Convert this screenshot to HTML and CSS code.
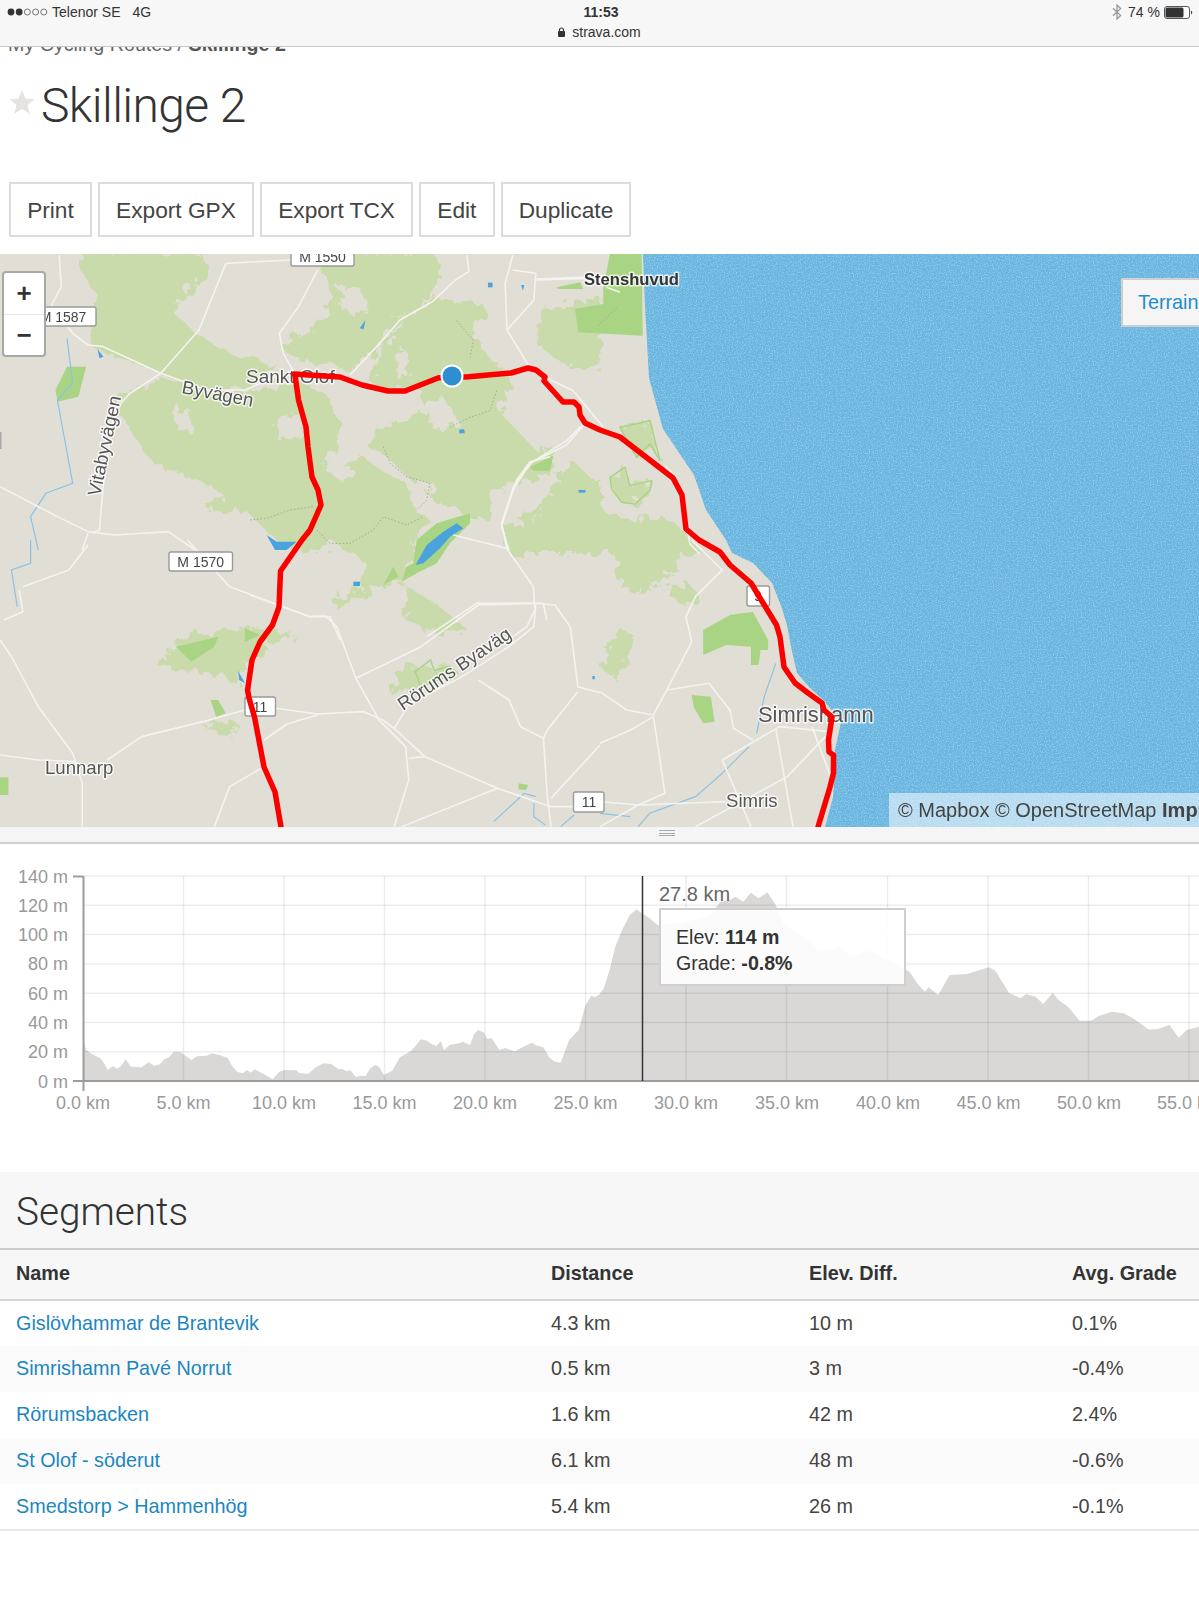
FILE: index.html
```html
<!DOCTYPE html>
<html lang="en">
<head>
<meta charset="utf-8">
<title>Skillinge 2 | Strava</title>
<link rel="stylesheet" href="styles.css">
</head>
<body>
<header class="status">
  <div class="status-left">
    <svg class="signal" width="42" height="10" viewBox="0 0 42 10"><circle cx="4" cy="5" r="3.4" fill="#333"/><circle cx="12.2" cy="5" r="3.4" fill="#333"/><circle cx="20.4" cy="5" r="3" fill="none" stroke="#555" stroke-width=".8"/><circle cx="28.6" cy="5" r="3" fill="none" stroke="#555" stroke-width=".8"/><circle cx="36.8" cy="5" r="3" fill="none" stroke="#555" stroke-width=".8"/></svg>
    <span class="carrier">Telenor SE</span><span>4G</span>
  </div>
  <div class="status-center">
    <div class="clock">11:53</div>
    <div class="url"><svg width="7" height="10" viewBox="0 0 7 10"><rect x="0" y="4" width="7" height="6" rx="1" fill="#333"/><path d="M1.5 4.5V3a2 2 0 0 1 4 0v1.5" fill="none" stroke="#333" stroke-width="1.2"/></svg>strava.com</div>
  </div>
  <div class="status-right">
    <svg width="10" height="16" viewBox="0 0 10 16"><path d="M1 4.2 8.6 11.4 5 15V1L8.6 4.6 1 11.8" fill="none" stroke="#999" stroke-width="1.3"/></svg>
    <span>74 %</span>
    <svg width="29" height="13" viewBox="0 0 29 13"><rect x=".5" y=".5" width="25" height="12" rx="2.5" fill="#fff" stroke="#555"/><rect x="1.5" y="1.5" width="18" height="10" rx="1.5" fill="#333"/><path d="M27 4.5a2.2 2.2 0 0 1 0 4z" fill="#444"/></svg>
  </div>
</header>

<nav class="crumbs">My Cycling Routes / <b>Skillinge 2</b></nav>

<div class="title-row">
  <svg class="star" width="26" height="24" viewBox="0 0 26 24"><path d="M13 0l3.4 8.6 9.2.6-7.1 5.9 2.3 8.9L13 18.9l-7.8 5.1 2.3-8.9L.4 9.2l9.2-.6z" fill="#e5e4e0"/></svg>
  <h1>Skillinge 2</h1>
</div>

<div class="actions">
  <a class="btn">Print</a>
  <a class="btn">Export GPX</a>
  <a class="btn">Export TCX</a>
  <a class="btn">Edit</a>
  <a class="btn">Duplicate</a>
</div>

<section class="map">
  <svg class="map-art" width="1199" height="573" viewBox="0 254 1199 573">
    <defs>
      <filter id="rough" x="-5%" y="-5%" width="110%" height="110%"><feTurbulence type="fractalNoise" baseFrequency=".1" numOctaves="3" seed="4"/><feDisplacementMap in="SourceGraphic" scale="20"/></filter>
      <filter id="grain" x="0" y="0" width="100%" height="100%"><feTurbulence type="fractalNoise" baseFrequency=".75" numOctaves="1" seed="7"/><feColorMatrix values="0 0 0 0 1 0 0 0 0 1 0 0 0 0 1 0 0 0 .9 -.38"/><feComposite in2="SourceAlpha" operator="in"/></filter>
    </defs>
    <rect class="land" x="0" y="254" width="1199" height="573"/>

    <g filter="url(#rough)">
      <g class="light">
      <g transform="translate(0,250) scale(.3827,.3333)">
        <polygon points="215,5 525,5 545,50 520,95 470,150 450,190 490,225 510,250 570,290 620,320 655,310 690,340 730,350 640,410 540,420 420,370 330,330 240,290 235,190 250,130 210,60"/>
        <polygon points="300,470 330,430 420,385 490,405 600,430 680,425 730,400 790,400 860,440 890,520 880,590 840,650 900,700 890,760 850,900 770,900 720,870 650,790 540,780 580,730 520,690 440,660 400,640 340,540"/>
        <polygon points="740,300 760,270 830,230 870,150 840,60 850,5 1130,5 1150,60 1130,130 1070,190 1015,240 980,300 910,370 870,340 780,330"/>
        <polygon points="1000,300 1060,200 1150,140 1240,180 1250,290 1300,320 1340,410 1300,480 1400,600 1450,590 1440,680 1350,700 1310,710 1210,790 1190,770 1120,740 1010,620 960,590 990,530 1050,520 1110,480 1100,420 1000,420 960,390"/>
        <polygon points="1400,250 1430,180 1520,150 1568,140 1568,360 1470,340 1420,300"/>
        <polygon points="1320,900 1330,830 1450,790 1500,700 1568,690 1568,900"/>
      </g>
      <g transform="translate(250,420) scale(.3333)">
        <polygon points="210,250 300,160 320,95 380,140 470,190 490,270 540,300 500,350 490,440 450,490 400,490 355,520 260,570 250,540 330,500 350,430 270,380 230,350 200,300"/>
        <polygon points="640,250 730,220 720,300 640,290"/>
        <polygon points="400,20 560,50 560,100 410,100"/>
        <polygon points="470,520 610,590 540,630 470,590"/>
        <polygon points="770,340 900,250 900,370 810,410"/>
        <polygon points="590,600 635,610 630,640 570,630"/>
        <polygon points="0,620 40,640 60,660 0,660"/>
      </g>
      <g transform="translate(450,254) scale(.3333)">
        <polygon points="250,270 300,190 375,190 380,240 430,250 420,330 350,340 320,270"/>
        <polygon points="160,820 260,770 320,680 370,620 430,680 470,780 560,800 640,790 700,830 740,880 760,900 180,900"/>
        <polygon points="510,520 600,500 630,620 600,570 560,610 530,560"/>
        <polygon points="0,140 100,150 110,190 60,210 0,190"/>
        <polygon points="480,670 525,640 540,695 605,680 600,710 555,750 515,745 485,705"/>
        <polygon points="40,740 130,715 110,790 40,790"/>
      </g>
      <g transform="translate(600,540) scale(.3821,.3333)">
        <polygon points="40,30 80,0 200,0 210,80 130,150 60,150 40,80"/>
        <polygon points="170,160 230,125 260,170 230,200"/>
        <polygon points="0,380 50,260 100,300 40,420"/>
      </g>
      <g transform="translate(0,540) scale(.3827,.3333)">
        <polygon points="410,375 470,285 650,265 770,280 690,320 640,375 610,440 585,400 490,395"/>
        <polygon points="530,560 600,540 630,560 590,590"/>
        <polygon points="1010,460 1060,380 1170,380 1190,400 1100,440"/>
        <polygon points="1050,130 1150,200 1210,270 1150,280 1060,240 1060,170"/>
      </g>
      </g>
      <g class="holes">
        <g transform="translate(0,250) scale(.3827,.3333)">
          <polygon points="880,110 940,110 960,180 900,190"/>
          <polygon points="1030,310 1060,300 1070,380 1035,380"/>
          <polygon points="1110,470 1160,440 1200,520 1130,540"/>
          <polygon points="720,500 790,490 770,560 725,570"/>
          <polygon points="450,490 500,480 500,550 460,540"/>
          <polygon points="1260,300 1330,290 1380,340 1300,350"/>
        </g>
        <g transform="translate(250,420) scale(.3333)">
          <polygon points="80,0 160,0 160,50 90,60"/>
          <polygon points="500,180 550,190 530,250 500,270"/>
        </g>
      </g>
    </g>

    <g class="mid">
      <g transform="translate(450,254) scale(.3333)">
        <polygon points="375,165 460,150 460,100 480,0 575,0 578,245 385,235"/>
        <polygon points="320,100 390,85 400,105 325,105"/>
        <polygon points="240,640 310,605 300,650 250,650"/>
      </g>
      <g transform="translate(0,250) scale(.3827,.3333)">
        <polygon points="175,350 225,350 205,440 150,455 145,420"/>
      </g>
      <g transform="translate(250,420) scale(.3333)">
        <polygon points="490,430 500,360 560,310 660,280 660,310 600,370 560,430 500,460 455,485 470,440"/>
        <polygon points="400,495 430,440 445,470"/>
      </g>
      <g transform="translate(600,540) scale(.3821,.3333)">
        <polygon points="270,270 340,225 400,215 440,300 440,330 420,330 415,375 395,375 395,320 330,315 270,345"/>
        <polygon points="240,465 290,470 300,545 270,550 245,500"/>
      </g>
      <g transform="translate(0,540) scale(.3827,.3333)">
        <polygon points="460,320 570,290 560,320 500,365"/>
        <polygon points="640,265 680,285 640,305"/>
        <polygon points="550,480 570,480 590,520 565,530"/>
        <polygon points="0,712 22,712 22,765 0,765"/>
        <polygon points="1355,730 1380,735 1375,750 1355,748"/>
      </g>
    </g>
    <g class="outline">
      <g transform="translate(450,254) scale(.3333)"><polygon points="480,670 525,640 540,695 605,680 600,710 555,750 515,745 485,705"/><polygon points="510,520 600,500 630,620 600,570 560,610"/></g>
      <g transform="translate(0,540) scale(.3827,.3333)"><polygon points="1085,395 1125,360 1135,392 1175,378 1195,400 1100,440"/></g>
    </g>
    <g class="trail">
      <g transform="translate(250,420) scale(.3333)">
        <polyline points="0,300 50,295 120,270 190,260"/>
        <polyline points="200,330 240,370 300,370 370,330 400,290 470,315 520,290"/>
        <polyline points="400,80 420,130 470,170 540,190 530,240 500,270"/>
      </g>
      <g transform="translate(450,254) scale(.3333)"><polyline points="445,215 505,155"/><polyline points="20,200 70,260 60,310"/><polyline points="140,410 120,470 60,490 0,520"/></g>
    </g>

    <g class="water">
      <g transform="translate(250,420) scale(.3333)">
        <polygon points="497,435 530,375 580,335 620,310 640,325 600,350 570,385 520,430"/>
        <polygon points="50,345 80,365 140,365 110,390 75,390"/>
        <rect x="310" y="485" width="20" height="13"/><rect x="630" y="28" width="12" height="10"/>
      </g>
      <g transform="translate(0,250) scale(.3827,.3333)">
        <rect x="1275" y="98" width="12" height="14"/><polygon points="1362,105 1370,105 1366,122"/><polygon points="940,235 955,210 950,238"/><rect x="1200" y="540" width="14" height="10"/><polygon points="255,298 270,320 260,325"/><rect x="1512" y="720" width="18" height="8"/>
      </g>
      <g transform="translate(0,540) scale(.3827,.3333)"><polygon points="622,392 640,430 625,420"/><rect x="1548" y="408" width="6" height="10"/></g>
    </g>

    <g class="river">
      <g transform="translate(0,250) scale(.3827,.3333)"><polyline points="175,265 190,400 150,450 190,700 120,730 80,800 100,900"/></g>
      <g transform="translate(0,540) scale(.3827,.3333)"><polyline points="80,0 80,70 30,90 45,200"/><polyline points="1290,845 1370,760 1400,770"/><polyline points="1395,790 1395,830 1425,855"/><polyline points="1465,860 1500,825"/></g>
      <g transform="translate(600,540) scale(.3821,.3333)"><polyline points="460,370 430,470 410,580"/><polyline points="390,620 320,700 250,770 130,820 100,860"/><polyline points="0,820 80,830"/></g>
    </g>

    <g class="road">
      <g transform="translate(0,250) scale(.3827,.3333)">
        <polyline points="155,15 160,110 135,165 190,250 230,285 270,290 420,370 540,420 640,420 720,380 760,370"/>
        <polyline points="590,40 760,30"/>
        <polyline points="590,40 520,240 420,370 340,430 300,480 270,700 260,840 240,850"/>
        <polyline points="830,60 780,170 730,250 740,310 770,370"/>
        <polyline points="915,375 1000,270 1045,210 1130,155 1190,90 1225,65 1220,15"/>
        <polyline points="1340,15 1320,100 1325,240 1380,345"/>
        <polyline points="1340,60 1400,70 1395,150 1325,240"/>
        <polyline points="1400,90 1530,85"/>
        <polyline points="0,710 150,800 230,845 300,855 440,845 510,900"/>
        <polyline points="1530,520 1480,585 1385,640 1340,720 1310,830 1330,900"/>
        <polyline points="230,850 215,900"/>
      </g>
      <g transform="translate(450,254) scale(.3333)">
        <polyline points="285,370 370,410 460,520"/>
        <polyline points="395,515 350,560 245,625 190,700 155,810 175,890"/>
        <polyline points="645,635 680,670"/>
        <polyline points="710,820 720,870 750,900"/>
        <polyline points="260,75 400,70"/><polyline points="470,100 510,115"/>
      </g>
      <g transform="translate(250,420) scale(.3333)">
        <polyline points="610,345 770,385 850,500 855,570 830,620 790,650"/>
        <polyline points="530,650 680,550 880,550 890,600"/>
        <polyline points="770,385 755,310 800,180 840,125 900,110"/>
        <polyline points="0,525 180,590 240,590 270,660"/>
      </g>
      <g transform="translate(0,540) scale(.3827,.3333)">
        <polyline points="810,230 850,228 880,260 930,415 990,540 1060,620 1068,720 1030,860"/>
        <polyline points="600,140 810,230"/><polyline points="490,0 600,140"/>
        <polyline points="930,415 1100,320 1250,195 1400,190 1450,195 1490,260 1510,440 1568,458"/>
        <polyline points="1400,190 1395,260 1330,320 1200,415 1070,490 1030,565"/>
        <polyline points="1000,540 1030,565 1110,650 1300,745 1440,800 1500,800"/>
        <polyline points="1068,655 1110,650"/><polyline points="1050,860 1300,745"/>
        <polyline points="1250,420 1330,480 1360,560 1420,595 1430,770 1440,860"/>
        <polyline points="1510,455 1430,570 1420,595"/><polyline points="1568,615 1500,700 1440,775"/>
        <polyline points="0,645 100,660 200,665"/>
        <polyline points="0,300 30,350 100,500 190,640 215,730 215,860"/>
        <polyline points="280,660 370,590 530,545 640,510"/>
        <polyline points="720,505 830,522 950,515 1000,540"/>
        <polyline points="690,600 750,552 830,525"/>
        <polyline points="560,860 600,740 690,680"/>
        <polyline points="60,140 180,90 230,15"/><polyline points="10,240 60,215 50,150"/>
      </g>
      <g transform="translate(600,540) scale(.3821,.3333)">
        <polyline points="0,455 70,510 140,525 175,450 240,305 225,230 250,170 320,90"/>
        <polyline points="175,450 285,430 340,510 350,565 400,600"/>
        <polyline points="0,610 80,570 140,530"/>
        <polyline points="140,530 170,760 100,795 0,785"/>
        <polyline points="100,795 330,785"/>
        <polyline points="320,660 470,560 600,575"/>
        <polyline points="460,565 505,860"/><polyline points="320,660 395,860"/>
        <polyline points="250,860 490,710 590,590"/>
        <polyline points="555,560 610,730"/><polyline points="320,90 240,0"/><polyline points="100,795 0,860"/>
      </g>
    </g>

    <polygon class="sea" points="643,254 1199,254 1199,827 825,827 833,797 835,773 835,750 841,722 823.5,700 810,688 797,673 791,647 787,625 781.5,607 772,583 753,563 732,553 726,540 706,510 694,475 663,429 649,378 645,306"/>
    <polygon class="sea-grain" filter="url(#grain)" points="643,254 1199,254 1199,827 825,827 833,797 835,773 835,750 841,722 823.5,700 810,688 797,673 791,647 787,625 781.5,607 772,583 753,563 732,553 726,540 706,510 694,475 663,429 649,378 645,306"/>

    <g class="shield">
      <rect x="291" y="246" width="63" height="20" rx="2"/><text x="322.5" y="262">M 1550</text>
      <rect x="30" y="307" width="66" height="19" rx="2"/><text x="63" y="322">M 1587</text>
      <rect x="169" y="552" width="63.5" height="19" rx="2"/><text x="200.7" y="567">M 1570</text>
      <rect x="245" y="697" width="30.5" height="19" rx="2"/><text x="260" y="712">11</text>
      <rect x="573.5" y="792" width="30.5" height="20" rx="2"/><text x="589" y="807">11</text>
      <rect x="747" y="586" width="22.5" height="20" rx="2"/><text x="758" y="601">9</text>
    </g>

    <g class="label">
      <text class="l19" x="246" y="383">Sankt Olof</text>
      <text class="l18" transform="translate(181,393) rotate(11)">Byvägen</text>
      <text class="l18" transform="translate(100,497) rotate(-78)">Vitabyvägen</text>
      <text class="l16b" x="584" y="285">Stenshuvud</text>
      <text class="l18" x="45" y="774">Lunnarp</text>
      <text class="l18" transform="translate(403,711) rotate(-34)">Rörums Byaväg</text>
      <text class="l21" x="758" y="722">Simrishamn</text>
      <text class="l18" x="726" y="807">Simris</text>
    </g>

    <polyline class="route" points="294,374 340,377 362,385 388,391 405,391 438,378 452,376 466,377 511,373 528,368 536,370 545,377 544,381 563,402 574,402 579,407 580,415 585,423 600,430 620,437 673,478 682,495 686,529 699,540 720,552 730,565 751,583 760,598 776.5,625 780,637 784,667 795,683 808,693 822,703 824,710 832,717 828.5,740 829,752 833.5,755 833.5,773 830,787 818,827"/>
    <polyline class="route" points="295,375 298.5,400 306,427 308,447 312,477 318,490 321,505 310,530 302,540 280.5,571 279,607 272.5,625 260,642 252,660 247.6,690 249,698 254.5,717 264,767 275,792 281,827"/>
    <circle cx="452" cy="376" r="11.5" fill="#fff"/>
    <circle cx="452" cy="376" r="9.5" fill="#2e8fd0"/>
    <rect x="0" y="432" width="1.5" height="17" fill="#aaa"/>
  </svg>

  <div class="zoom">
    <div class="zoom-btn">+</div>
    <div class="zoom-btn">−</div>
  </div>
  <div class="terrain">Terrain</div>
  <div class="attrib">© Mapbox © OpenStreetMap <b>Improve this map</b></div>
</section>

<div class="resize"><span class="grip"></span></div>

<section class="chart">
  <svg class="chart-art" width="1199" height="328" viewBox="0 844 1199 328">
    <g class="area">
      <path transform="translate(0,850) scale(.3827,.3333)" d="M218,692 L218,570 225,600 240,612 262,625 272,640 282,660 295,648 305,656 315,650 328,628 342,650 370,652 388,636 403,647 418,643 430,627 440,623 455,605 470,606 485,617 500,630 515,619 540,617 555,610 575,616 595,624 605,645 620,666 635,670 645,660 655,668 665,658 690,673 712,688 730,665 745,660 775,661 780,668 805,672 825,652 845,640 865,642 885,658 895,657 905,664 915,660 930,682 940,677 955,678 968,655 980,645 990,650 1003,675 1025,662 1045,622 1075,602 1100,568 1115,572 1128,582 1140,588 1152,574 1160,600 1175,585 1200,580 1210,575 1228,585 1240,550 1250,540 1265,548 1272,566 1285,565 1305,600 1320,594 1345,604 1365,592 1390,578 1400,586 1420,592 1435,622 1450,635 1465,638 1487,570 1512,540 1530,465 1545,437 1555,442 1568,432 1568,692Z"/>
      <path transform="translate(600,850) scale(.3821,.3333)" d="M0,692 L0,430 10,415 25,360 40,290 60,235 78,195 95,178 110,190 130,205 150,225 160,225 230,215 290,195 315,155 340,150 355,140 375,155 395,128 415,145 438,127 460,165 480,220 530,260 575,300 600,300 625,290 660,320 705,300 740,325 780,345 810,365 830,400 850,425 860,412 885,435 915,375 960,372 1000,358 1018,352 1035,362 1070,428 1100,445 1115,432 1140,440 1160,462 1185,428 1200,450 1225,470 1255,512 1285,512 1305,498 1340,485 1370,490 1395,505 1435,538 1460,538 1490,524 1515,563 1535,540 1568,530 1568,692Z"/>
    </g>
    <g class="grid">
      <line x1="83" y1="876" x2="1199" y2="876"/><line x1="83" y1="905.3" x2="1199" y2="905.3"/><line x1="83" y1="934.6" x2="1199" y2="934.6"/><line x1="83" y1="963.9" x2="1199" y2="963.9"/><line x1="83" y1="993.2" x2="1199" y2="993.2"/><line x1="83" y1="1022.5" x2="1199" y2="1022.5"/><line x1="83" y1="1051.8" x2="1199" y2="1051.8"/>
      <line x1="183.5" y1="876" x2="183.5" y2="1081"/><line x1="284" y1="876" x2="284" y2="1081"/><line x1="384.5" y1="876" x2="384.5" y2="1081"/><line x1="485" y1="876" x2="485" y2="1081"/><line x1="585.5" y1="876" x2="585.5" y2="1081"/><line x1="686" y1="876" x2="686" y2="1081"/><line x1="786.5" y1="876" x2="786.5" y2="1081"/><line x1="887.5" y1="876" x2="887.5" y2="1081"/><line x1="988" y1="876" x2="988" y2="1081"/><line x1="1088.5" y1="876" x2="1088.5" y2="1081"/><line x1="1189" y1="876" x2="1189" y2="1081"/>
    </g>
    <g class="axis">
      <line x1="83.5" y1="876" x2="83.5" y2="1091"/>
      <line x1="73" y1="876.5" x2="83" y2="876.5"/>
      <line x1="73" y1="1081" x2="1199" y2="1081"/>
    </g>
    <line class="cursor" x1="642.5" y1="876" x2="642.5" y2="1081"/>
    <g class="ylabels">
      <text x="68" y="882.5">140 m</text><text x="68" y="911.8">120 m</text><text x="68" y="941.1">100 m</text><text x="68" y="970.4">80 m</text><text x="68" y="999.7">60 m</text><text x="68" y="1029">40 m</text><text x="68" y="1058.3">20 m</text><text x="68" y="1087.5">0 m</text>
    </g>
    <g class="xlabels">
      <text x="83" y="1109">0.0 km</text><text x="183.5" y="1109">5.0 km</text><text x="284" y="1109">10.0 km</text><text x="384.5" y="1109">15.0 km</text><text x="485" y="1109">20.0 km</text><text x="585.5" y="1109">25.0 km</text><text x="686" y="1109">30.0 km</text><text x="787" y="1109">35.0 km</text><text x="888" y="1109">40.0 km</text><text x="988.5" y="1109">45.0 km</text><text x="1089" y="1109">50.0 km</text><text x="1189" y="1109">55.0 km</text>
    </g>
    <text class="cursor-label" x="659" y="901">27.8 km</text>
  </svg>
  <div class="tip">
    <div>Elev: <b>114 m</b></div>
    <div>Grade: <b>-0.8%</b></div>
  </div>
</section>

<section class="segments">
  <h2>Segments</h2>
  <table>
    <colgroup><col class="c1"><col class="c2"><col class="c3"><col class="c4"></colgroup>
    <thead><tr><th>Name</th><th>Distance</th><th>Elev. Diff.</th><th>Avg. Grade</th></tr></thead>
    <tbody>
      <tr><td><a>Gislövhammar de Brantevik</a></td><td>4.3 km</td><td>10 m</td><td>0.1%</td></tr>
      <tr><td><a>Simrishamn Pavé Norrut</a></td><td>0.5 km</td><td>3 m</td><td>-0.4%</td></tr>
      <tr><td><a>Rörumsbacken</a></td><td>1.6 km</td><td>42 m</td><td>2.4%</td></tr>
      <tr><td><a>St Olof - söderut</a></td><td>6.1 km</td><td>48 m</td><td>-0.6%</td></tr>
      <tr><td><a>Smedstorp &gt; Hammenhög</a></td><td>5.4 km</td><td>26 m</td><td>-0.1%</td></tr>
    </tbody>
  </table>
</section>
</body>
</html>
```
FILE: styles.css
```css
* { box-sizing: border-box; }
html, body { margin: 0; padding: 0; }
body {
  width: 1199px;
  height: 1600px;
  overflow: hidden;
  position: relative;
  background: #fff;
  color: #333;
  font-family: "Liberation Sans", Arial, sans-serif;
}

/* iOS status / address bar, sitting over the scrolled page */
.status {
  position: absolute;
  top: 0;
  left: 0;
  width: 1199px;
  height: 47px;
  z-index: 5;
  display: grid;
  grid-template-columns: 1fr auto 1fr;
  background: #f7f7f7;
  border-bottom: 1px solid #c8c8c8;
  font-size: 14px;
  color: #333;
}
.status-left { display: flex; align-items: center; gap: 12px; height: 24px; padding-left: 7px; }
.signal { margin-right: -9px; }
.status-center { text-align: center; padding-left: 3px; }
.clock { font-weight: bold; line-height: 24px; height: 22px; }
.url { line-height: 20px; display: flex; align-items: center; justify-content: center; gap: 7px; margin-left: -3px; }
.status-right { display: flex; justify-content: flex-end; align-items: center; gap: 4px; height: 24px; padding-right: 6px; }
.status-right span { margin-left: 2px; }

.crumbs { height: 55px; padding: 33px 0 0 8px; font-size: 19.7px; line-height: 22px; color: #666; white-space: nowrap; }
.crumbs b { color: #555; }

.title-row { display: flex; align-items: flex-start; height: 127px; padding-left: 9px; }
.star { margin-top: 35px; flex: none; }
h1 {
  margin: 20px 0 0 6px;
  font-family: Roboto, "Liberation Sans", sans-serif;
  font-weight: 300;
  font-size: 48px;
  line-height: 62px;
  letter-spacing: -0.6px;
  color: #333;
}

.actions { display: flex; gap: 6px; height: 55px; margin: 0 0 17px 9px; }
.btn {
  display: flex;
  align-items: center;
  padding: 2px 16.15px 0;
  border: 2px solid #dcdcdc;
  font-size: 22.7px;
  color: #444;
}

.map { position: relative; height: 573px; overflow: hidden; background: #e1ded6; }
.map-art { display: block; }
.land { fill: #e1ded6; }
.light polygon { fill: #c9dbaa; }
.holes polygon { fill: #e1ded6; }
.mid polygon { fill: #a9d484; }
.outline polygon { fill: none; stroke: #a9d484; stroke-width: 1.5; vector-effect: non-scaling-stroke; }
.trail polyline { fill: none; stroke: #a5a79a; stroke-width: 1; stroke-dasharray: 1.5 2; vector-effect: non-scaling-stroke; }
.water polygon, .water rect { fill: #4aa3de; }
.river polyline { fill: none; stroke: #8cc2e4; stroke-width: 1.2; vector-effect: non-scaling-stroke; }
.road polyline { fill: none; stroke: #f4f3ef; stroke-width: 1.6; stroke-linejoin: round; vector-effect: non-scaling-stroke; }
.sea { fill: #66b4df; }
.sea-grain { fill: #fff; }
.shield rect { fill: #fff; stroke: #9a9a9a; stroke-width: 1.4; }
.shield text { font-size: 14px; fill: #444; text-anchor: middle; }
.label text { fill: #555; paint-order: stroke; stroke: rgba(255,255,255,.75); stroke-width: 3px; stroke-linejoin: round; }
.l16b { font-size: 16.6px; font-weight: bold; fill: #333 !important; }
.l18 { font-size: 18.6px; }
.l19 { font-size: 19px; }
.l21 { font-size: 21.9px; }
.route { fill: none; stroke: #fc0000; stroke-width: 5.5; stroke-linejoin: round; stroke-linecap: round; }

.zoom {
  position: absolute;
  left: 2px;
  top: 17px;
  width: 44px;
  height: 86px;
  background: #fff;
  border: 2px solid #a8a8a8;
  border-radius: 4px;
}
.zoom-btn {
  height: 41px;
  display: flex;
  align-items: center;
  justify-content: center;
  font-size: 26px;
  font-weight: bold;
  color: #333;
}
.zoom-btn + .zoom-btn { border-top: 1px solid #e5e5e5; }
.terrain {
  position: absolute;
  left: 1121px;
  top: 24px;
  width: 90px;
  height: 49px;
  padding-left: 15px;
  background: #f5f5f5;
  border: 2px solid #cfcfcf;
  font-size: 19.8px;
  line-height: 45px;
  color: #1b8ec9;
}
.attrib {
  position: absolute;
  left: 889px;
  right: 0;
  top: 539px;
  bottom: 0;
  padding-left: 9px;
  background: rgba(255,255,255,.52);
  font-size: 20px;
  line-height: 34px;
  color: #444;
  white-space: nowrap;
  overflow: hidden;
}

.resize { height: 17px; display: flex; justify-content: center; padding: 3px 0 0 135px; background: #f5f5f5; border-bottom: 2px solid #d0d0d0; }
.grip { width: 16px; height: 8px; background: repeating-linear-gradient(#aaa 0 1px, #f5f5f5 1px 2.6px); }

.chart { position: relative; height: 328px; }
.chart-art { display: block; }
.area path { fill: #d9d8d6; }
.grid line { stroke: rgba(0,0,0,.075); stroke-width: 1.5; }
.axis line { stroke: #9c9c9c; stroke-width: 2; }
.cursor { stroke: #333; stroke-width: 1.5; }
.ylabels text { font-size: 18px; fill: #999; text-anchor: end; }
.xlabels text { font-size: 18px; fill: #999; text-anchor: middle; }
.cursor-label { font-size: 20px; fill: #666; }
.tip {
  position: absolute;
  left: 659px;
  top: 64px;
  width: 247px;
  height: 78px;
  padding: 15px 0 0 15px;
  background: rgba(255,255,255,.9);
  border: 2px solid #cfcfcf;
  font-size: 19.6px;
  line-height: 25.5px;
  color: #333;
}

h2 {
  margin: 0;
  height: 76px;
  padding: 17px 0 0 16px;
  background: #f7f7f7;
  font-family: Roboto, "Liberation Sans", sans-serif;
  font-weight: 300;
  font-size: 38.7px;
  line-height: 46px;
  color: #333;
}
table { width: 1199px; table-layout: fixed; border-collapse: collapse; font-size: 19.8px; }
.c1 { width: 551px; }
.c2 { width: 258px; }
.c3 { width: 263px; }
.c4 { width: 127px; }
th {
  height: 51px;
  padding: 0 0 2px 16px;
  text-align: left;
  background: #f7f7f7;
  border-top: 2px solid #ccc;
  border-bottom: 2px solid #d8d8d8;
  color: #333;
}
td { height: 46px; padding: 0 0 1px 16px; color: #444; }
td + td { padding: 0 0 1px 0; }
th + th { padding: 0 0 2px 0; }
td a { color: #1b86c0; }
tbody tr:nth-child(even) { background: #fafafa; }
tbody tr:last-child td { border-bottom: 2px solid #e8e8e8; }
```
